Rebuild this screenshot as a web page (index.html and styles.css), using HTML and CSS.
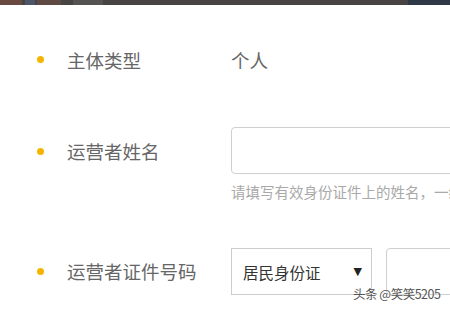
FILE: index.html
```html
<!DOCTYPE html>
<html lang="zh-CN">
<head>
<meta charset="utf-8">
<link rel="stylesheet" href="styles.css">
</head>
<body>
<div class="topbar">
  <span class="tb-logo tb-red"></span>
  <span class="tb-logo tb-blue"></span>
  <span class="tb-logo tb-red2"></span>
  <span class="tb-text"></span>
  <span class="tb-right"></span>
</div>
<div class="form">
  <div class="row row-type">
    <span class="dot"></span>
    <span class="label">主体类型</span>
    <div class="field"><span class="value">个人</span></div>
  </div>
  <div class="row row-name">
    <span class="dot"></span>
    <span class="label">运营者姓名</span>
    <div class="field">
      <div class="input input-wide"></div>
      <div class="hint">请填写有效身份证件上的姓名，一经提交无法修改</div>
    </div>
  </div>
  <div class="row row-id">
    <span class="dot"></span>
    <span class="label">运营者证件号码</span>
    <div class="field field-inline">
      <div class="select"><span>居民身份证</span><span class="arrow">▼</span></div>
      <div class="input input-id"></div>
    </div>
  </div>
</div>
<div class="watermark">头条 @笑笑5205</div>
</body>
</html>
```
FILE: styles.css
```css
html, body {
  margin: 0;
  padding: 0;
  background: #fff;
  width: 450px;
  height: 330px;
  overflow: hidden;
  font-family: "Noto Sans CJK SC", "Noto Sans", sans-serif;
}
.topbar {
  height: 5px;
  background: #474443;
  display: flex;
  align-items: stretch;
  position: relative;
}
.tb-logo { height: 5px; }
.tb-red { width: 22px; background: #6a4a40; }
.tb-blue { width: 10px; margin-left: 3px; background: #4d5568; }
.tb-red2 { width: 24px; margin-left: 2px; background: #5e4a42; }
.tb-text { width: 30px; margin-left: 12px; background: #555351; }
.tb-right { margin-left: auto; width: 42px; background: #2f3946; }

.form {
  padding-left: 37px;
  overflow: hidden;
}
.row {
  display: flex;
  align-items: flex-start;
}
.dot {
  flex: none;
  width: 7px;
  height: 7px;
  border-radius: 50%;
  background: #f5b400;
  margin-right: 23px;
}
.label {
  flex: none;
  width: 164px;
  font-size: 18.5px;
  color: #666;
  line-height: 46px;
  white-space: nowrap;
}
.field {
  flex: none;
  width: 260px;
}
.value {
  font-size: 18.5px;
  color: #666;
  line-height: 46px;
  display: block;
}
.row-type { margin-top: 32px; }
.row-type .dot { margin-top: 19px; }
.row-name { margin-top: 44px; }
.row-name .dot { margin-top: 21px; }
.row-name .label { line-height: 48px; }
.row-id { margin-top: 46px; }
.row-id .dot { margin-top: 20px; }
.row-id .label { line-height: 46px; }

.input {
  box-sizing: border-box;
  height: 47px;
  border: 1px solid #cfcfcf;
  border-radius: 4px;
  background: #fff;
}
.input-wide { width: 260px; }
.hint {
  margin-top: 8px;
  font-size: 14.5px;
  line-height: 20px;
  color: #a9a9a9;
  white-space: nowrap;
}
.field-inline {
  display: flex;
  gap: 14px;
}
.select {
  flex: none;
  box-sizing: border-box;
  width: 141px;
  height: 47px;
  border: 1px solid #cdcdcd;
  padding: 0 9px 0 11px;
  display: flex;
  align-items: center;
  justify-content: space-between;
  font-size: 15.5px;
  color: #333;
}
.arrow {
  font-size: 11px;
  color: #222;
  font-family: "DejaVu Sans", sans-serif;
}
.input-id { flex: none; width: 100px; }

.watermark {
  position: absolute;
  left: 353px;
  top: 284px;
  font-size: 12.5px;
  color: #555;
  letter-spacing: -0.5px;
  text-shadow: 0 0 2px #fff;
  white-space: nowrap;
}
```
